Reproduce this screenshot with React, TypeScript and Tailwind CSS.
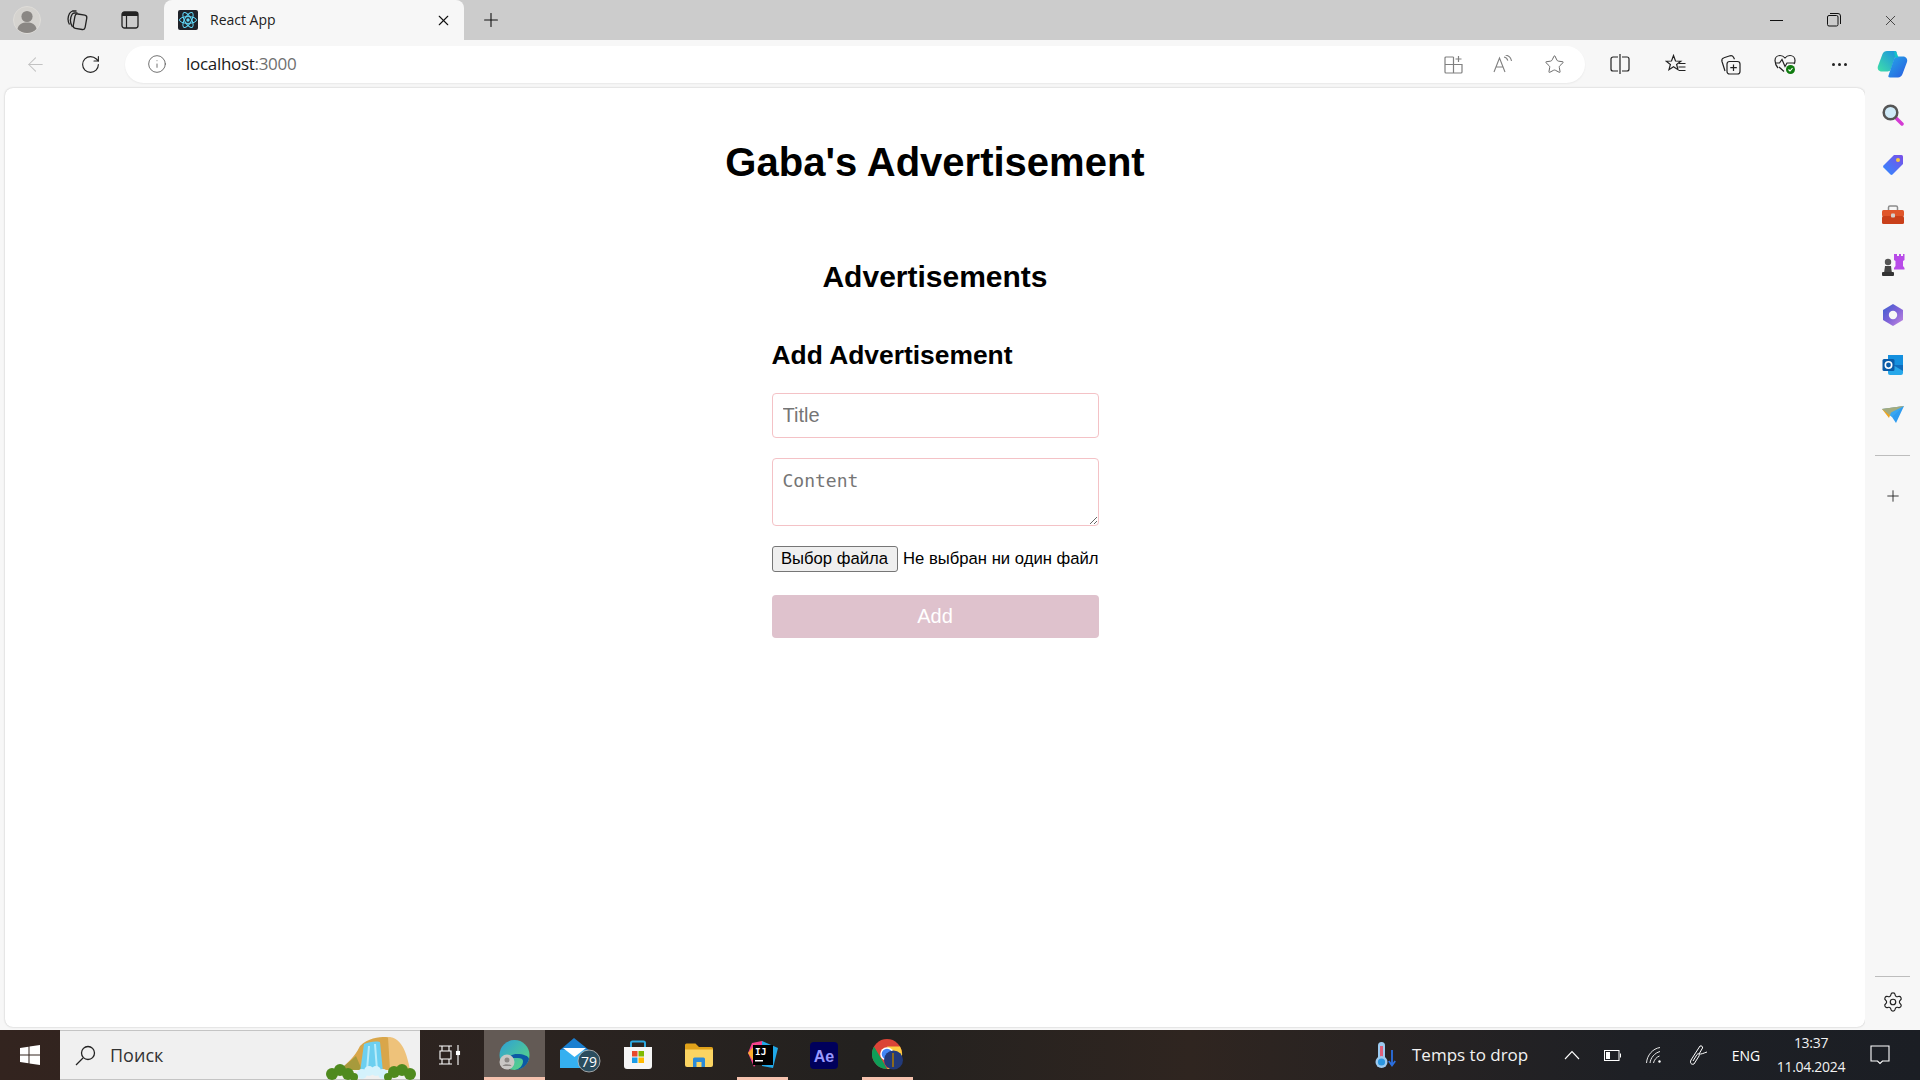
import { ArrowLeft, Info, Plus, RotateCw, Settings, Star, X } from 'lucide-react';
import type { ReactNode } from 'react';

function Slot({ w, children, className = '' }: { w: string; children?: ReactNode; className?: string }) {
  return <div className={`flex shrink-0 items-center justify-center ${w} ${className}`}>{children}</div>;
}

function ReactLogo({ size = 20 }: { size?: number }) {
  return (
    <svg width={size} height={size} viewBox="0 0 20 20">
      <rect width="20" height="20" rx="2" fill="#20232a" />
      <g fill="none" stroke="#61dafb" strokeWidth="1">
        <ellipse cx="10" cy="10" rx="8.5" ry="3.4" />
        <ellipse cx="10" cy="10" rx="8.5" ry="3.4" transform="rotate(60 10 10)" />
        <ellipse cx="10" cy="10" rx="8.5" ry="3.4" transform="rotate(120 10 10)" />
      </g>
      <circle cx="10" cy="10" r="1.7" fill="#61dafb" />
    </svg>
  );
}

function TabStrip() {
  return (
    <div className="flex h-10 items-center bg-[#cccccc]">
      <Slot w="w-[54px]">
        <svg width="28" height="28" viewBox="0 0 28 28">
          <circle cx="14" cy="14" r="13.5" fill="#d5d3cf" stroke="#dedcd8" />
          <circle cx="14" cy="10.5" r="5.6" fill="#8a8784" />
          <path d="M4.5 23c.8-4.6 4.6-6.5 9.5-6.5s8.700 1.900 9.500 6.500c-2.500 2.600-5.800 4-9.500 4s-7-1.400-9.500-4z" fill="#8a8784" />
        </svg>
      </Slot>
      <Slot w="w-[46px]">
        <svg width="22" height="22" viewBox="0 0 22 22" fill="none" stroke="#222" strokeWidth="1.3">
          <rect x="8" y="5.500" width="12" height="14.500" rx="2.500" transform="rotate(10 14 13)" />
          <path d="M6.500 18C4 14 4 9 6 5.500c.6-1 1.500-1.500 2.500-1.500h3M3.500 15.500C1.600 12 1.600 8 3.500 4.500c.7-1.300 1.700-2 3-2.500h4" />
        </svg>
      </Slot>
      <Slot w="w-[60px]">
        <svg width="18" height="18" viewBox="0 0 18 18">
          <rect x="1" y="1" width="16" height="16" rx="2.500" fill="none" stroke="#222" strokeWidth="1.300" />
          <path d="M1 3.500a2.500 2.500 0 0 1 2.500-2.500h11a2.500 2.500 0 0 1 2.500 2.500V5H1z" fill="#222" />
          <path d="M5.500 5v12" stroke="#222" strokeWidth="1.200" />
        </svg>
      </Slot>
      <div className="ml-1 flex h-10 w-[300px] items-center rounded-t-lg bg-[#f7f7f7] pl-[14px]">
        <ReactLogo />
        <span className="ml-3 -mt-[2px] font-['Open_Sans',sans-serif] text-[14px] text-[#222]">React App</span>
        <X className="ml-auto mr-[12px]" size={17} strokeWidth={1.5} color="#111" />
      </div>
      <Slot w="w-[54px]">
        <Plus size={22} strokeWidth={1.2} color="#111" />
      </Slot>
      <div className="ml-auto flex items-center pr-px">
        <Slot w="w-[57px]">
          <div className="h-px w-[13px] bg-[#111]" />
        </Slot>
        <Slot w="w-[57px]">
          <svg width="14" height="14" viewBox="0 0 14 14" fill="none" stroke="#111" strokeWidth="1">
            <rect x="0.500" y="2.500" width="10.500" height="10.500" rx="1.500" />
            <path d="M3 .5h8a2.500 2.500 0 0 1 2.500 2.500v8" />
          </svg>
        </Slot>
        <Slot w="w-[57px]">
          <X size={17} strokeWidth={1} color="#111" />
        </Slot>
      </div>
    </div>
  );
}

function Toolbar() {
  return (
    <div className="flex h-12 items-center bg-[#f7f7f7]">
      <Slot w="w-[70px]">
        <ArrowLeft size={23} strokeWidth={1.1} color="#c2c2c2" />
      </Slot>
      <Slot w="w-[40px]">
        <RotateCw size={21} strokeWidth={1.3} color="#222" />
      </Slot>
      <div className="ml-[15px] flex h-[37px] w-[1460px] items-center rounded-full bg-white shadow-[0_1px_2px_rgba(0,0,0,0.06)]">
        <Slot w="w-[61px]" className="pl-[3px]">
          <Info size={20} strokeWidth={1} color="#555" />
        </Slot>
        <span className="font-['Open_Sans',sans-serif] text-[17px] tracking-[-0.3px] text-[#1a1a1a]">
          localhost<span className="text-[#6f6f6f]">:3000</span>
        </span>
        <div className="ml-auto flex items-center pr-[5px]">
          <Slot w="w-[50px]">
            <svg width="19" height="19" viewBox="0 0 19 19" fill="none" stroke="#808080" strokeWidth="1.200">
              <path d="M9.500 2H2a1 1 0 0 0-1 1v14a1 1 0 0 0 1 1h15a1 1 0 0 0 1-1V9.500H1M9.500 2v16M14.500 1v6M11.500 4h6" />
            </svg>
          </Slot>
          <Slot w="w-[50px]">
            <svg width="20" height="18" viewBox="0 0 20 18" fill="none" stroke="#808080" strokeWidth="1.100">
              <path d="M1 17 6.500 3 12 17M3 12h7" />
              <path d="M11 2c2 .4 3.300 1.700 3.800 3.700M12.500 0c3 .5 5.500 2.800 6 6" />
            </svg>
          </Slot>
          <Slot w="w-[52px]">
            <Star size={21} strokeWidth={1.1} color="#666" />
          </Slot>
        </div>
      </div>
      <Slot w="w-[57px]" className="ml-[6px]">
        <svg width="20" height="20" viewBox="0 0 20 20" fill="none" stroke="#222" strokeWidth="1.200">
          <path d="M8 3H3a2 2 0 0 0-2 2v10a2 2 0 0 0 2 2h5M12 3h5a2 2 0 0 1 2 2v10a2 2 0 0 1-2 2h-5M10 0v20" />
        </svg>
      </Slot>
      <Slot w="w-[54px]">
        <svg width="21" height="20" viewBox="0 0 21 20" fill="none" stroke="#222" strokeWidth="1.200">
          <path d="M8.500 1.500 10.500 7l5.300.2-4.200 3.300 1.400 5.200-4.500-3-4.500 3 1.400-5.200L1.200 7.200 6.500 7z" />
          <path d="M14 9.500h6.500M13.500 13h7M14 16.500h6.500" />
        </svg>
      </Slot>
      <Slot w="w-[56px]">
        <svg width="21" height="21" viewBox="0 0 21 21" fill="none" stroke="#222" strokeWidth="1.200">
          <rect x="7" y="7.500" width="13" height="12.500" rx="2.500" />
          <path d="M13.500 10.500v6.500M10.300 13.700h6.500" />
          <path d="M5 17 2 7.500a3 3 0 0 1 2-3.700L10 1.800a3 3 0 0 1 3.500 1.500l1 2" />
        </svg>
      </Slot>
      <Slot w="w-[54px]">
        <svg width="22" height="22" viewBox="0 0 22 22" fill="none">
          <path d="M4 15C1.500 12 1 10 1 7.500 1 4.500 3.300 2.500 6 2.500c2 0 3.800 1 5 2.500 1.200-1.500 3-2.500 5-2.500 2.700 0 5 2 5 5 0 1.300-.3 2.500-1 3.500" stroke="#222" strokeWidth="1.200" />
          <path d="M1 10h4.500L8 6.500l3 7 2-3.500h7M5 14l5 4.500" stroke="#222" strokeWidth="1.200" />
          <circle cx="16.500" cy="16.500" r="4.500" fill="#107c10" />
          <path d="m14.500 16.500 1.500 1.500 2.500-2.800" stroke="#fff" strokeWidth="1.100" />
        </svg>
      </Slot>
      <Slot w="w-[55px]">
        <div className="flex gap-[3px]">
          <div className="size-[3px] rounded-full bg-[#222]" />
          <div className="size-[3px] rounded-full bg-[#222]" />
          <div className="size-[3px] rounded-full bg-[#222]" />
        </div>
      </Slot>
      <Slot w="w-[50px]">
        <svg width="31" height="28" viewBox="0 0 31 28">
          <defs>
            <linearGradient id="copA" x1="0" y1="1" x2="1" y2="0">
              <stop offset="0" stopColor="#3fe0a8" />
              <stop offset="1" stopColor="#1b8fe0" />
            </linearGradient>
            <linearGradient id="copB" x1="0" y1="0" x2="1" y2="1">
              <stop offset="0" stopColor="#24a9e8" />
              <stop offset="1" stopColor="#2a5ae0" />
            </linearGradient>
          </defs>
          <path d="M10 1h8c1.500 0 2 1 1.500 2L14 19c-.6 1.700-1.800 2.500-3.500 2.500H5C1.500 21.500 0 19 1 16L5.500 4C6.300 2 8 1 10 1z" fill="url(#copA)" />
          <path d="M21 6.500h5c3 0 5 2.500 4 5.500l-4.500 12c-.8 2-2.500 3.500-4.500 3.500h-8c-1.500 0-2-1-1.500-2L17 9c.6-1.700 2.200-2.500 4-2.500z" fill="url(#copB)" />
          <path d="M17 1c2 0 2.500 1.500 3.500 4l1 2.500H18z" fill="#12c3c8" />
        </svg>
      </Slot>
    </div>
  );
}

function AdForm() {
  return (
    <div className="flex w-[327px] flex-col items-stretch">
      <h2 className="mt-[46px] text-[26.4px] font-bold leading-[30px] text-black">Add Advertisement</h2>
      <input
        type="text"
        placeholder="Title"
        className="mt-[23px] h-[45px] rounded-[4px] border border-[#f4c2c6] bg-white px-[10px] text-[20px] text-black outline-none placeholder:text-[#757575]"
      />
      <textarea
        placeholder="Content"
        className="mt-[20px] h-[68px] rounded-[4px] border border-[#f4c2c6] bg-white px-[10px] pb-[9px] pt-[11px] font-['DejaVu_Sans_Mono',monospace] text-[18px] leading-[21px] outline-none placeholder:text-[#757575]"
      />
      <div className="mt-[20px] flex h-[26px] items-center justify-between">
        <button className="h-[26px] w-[126px] shrink-0 whitespace-nowrap rounded-[3px] border border-[#767676] bg-[#efefef] text-center text-[16.67px] leading-none text-black">
          Выбор файла
        </button>
        <span className="whitespace-nowrap text-[16.67px] leading-none text-black">Не выбран ни один файл</span>
      </div>
      <button className="mt-[23px] h-[43px] rounded-[4px] bg-[#dfc2cd] pb-[2px] text-[20px] text-white">Add</button>
    </div>
  );
}

function SidebarIcons() {
  return (
    <div className="flex w-[55px] shrink-0 flex-col items-center bg-[#f7f7f7] pt-[1px]">
      <Slot w="w-full h-[51px]">
        <svg width="22" height="22" viewBox="0 0 22 22">
          <path d="M13.500 13.500 20 20" stroke="#d43bd4" strokeWidth="3.500" strokeLinecap="round" />
          <circle cx="8.500" cy="8.500" r="6.800" fill="#cfeaf8" stroke="#555" strokeWidth="2.500" />
        </svg>
      </Slot>
      <Slot w="w-full h-[50px]">
        <svg width="22" height="22" viewBox="0 0 22 22">
          <defs>
            <linearGradient id="tagG" x1="0" y1="1" x2="1" y2="0">
              <stop offset="0" stopColor="#2f8bff" />
              <stop offset="1" stopColor="#7a4fe8" />
            </linearGradient>
          </defs>
          <path d="M12 1h7.500A1.500 1.500 0 0 1 21 2.500V10L10.500 20.500a1.500 1.500 0 0 1-2 0l-7-7a1.500 1.500 0 0 1 0-2z" fill="url(#tagG)" />
          <circle cx="16" cy="6" r="2" fill="#f7c744" />
        </svg>
      </Slot>
      <Slot w="w-full h-[50px]">
        <svg width="24" height="20" viewBox="0 0 24 20">
          <path d="M7.500 5V2.500A1.500 1.500 0 0 1 9 1h6a1.500 1.500 0 0 1 1.500 1.500V5" fill="none" stroke="#8c8c8c" strokeWidth="1.500" />
          <rect x="1" y="5" width="22" height="6.500" rx="1.500" fill="#e0562a" />
          <rect x="1" y="11" width="22" height="8" rx="1.500" fill="#c9401a" />
          <rect x="10" y="8.500" width="4" height="4" rx="1" fill="#d5d0cc" />
        </svg>
      </Slot>
      <Slot w="w-full h-[50px]">
        <svg width="24" height="24" viewBox="0 0 24 24">
          <path d="M14 1h2v2h2V1h2v2h2V1h1.500v6l-1.500 1v5l1.500 2v1.500H13V15l1.500-2V8L13 7V1z" fill="#b84be8" />
          <circle cx="7" cy="9" r="3.200" fill="#555" />
          <path d="M4 13h6l.8 6H3.200z" fill="#444" />
          <rect x="1" y="19" width="12" height="4" rx="1" fill="#333" />
        </svg>
      </Slot>
      <Slot w="w-full h-[50px]">
        <svg width="22" height="24" viewBox="0 0 22 24">
          <defs>
            <linearGradient id="m365" x1="0" y1="0" x2="1" y2="1">
              <stop offset="0" stopColor="#3a5fd0" />
              <stop offset="0.5" stopColor="#7d62d8" />
              <stop offset="1" stopColor="#c68ae0" />
            </linearGradient>
          </defs>
          <path d="M11 1 21 7v10l-10 6L1 17V7z" fill="url(#m365)" />
          <circle cx="11" cy="12" r="4.200" fill="#f7f7f7" />
        </svg>
      </Slot>
      <Slot w="w-full h-[50px]">
        <svg width="22" height="22" viewBox="0 0 22 22">
          <rect x="6" y="1" width="15" height="10" fill="#1490df" />
          <path d="M6 11h15v8a2 2 0 0 1-2 2H8a2 2 0 0 1-2-2z" fill="#28a8ea" />
          <path d="M11 11 21 17v-6z" fill="#0f6cbd" />
          <rect x="0.500" y="5" width="12" height="12" rx="1.500" fill="#0a5ca8" />
          <circle cx="6.500" cy="11" r="3.200" fill="none" stroke="#fff" strokeWidth="1.600" />
        </svg>
      </Slot>
      <Slot w="w-full h-[50px]">
        <svg width="24" height="18" viewBox="0 0 24 18">
          <path d="M1 3 23 0 15 17 11 11z" fill="#2f9cf0" />
          <path d="M1 3 23 0 10 6.500 8 12z" fill="#f0a51e" />
          <path d="M1 3 23 0 11 11z" fill="#45b4f5" opacity="0.45" />
        </svg>
      </Slot>
      <div className="mt-[15px] h-px w-[35px] bg-[#bdbdbd]" />
      <Slot w="w-full h-[79px]">
        <Plus size={18} strokeWidth={1.2} color="#222" />
      </Slot>
      <div className="mt-auto h-px w-[35px] bg-[#bdbdbd]" />
      <Slot w="w-full h-[50px]">
        <Settings size={22} strokeWidth={1.3} color="#222" />
      </Slot>
    </div>
  );
}

function Taskbar() {
  return (
    <div className="flex h-[50px] items-stretch bg-[linear-gradient(90deg,#33241f_0%,#2a2320_30%,#23211f_45%,#2f2520_62%,#1e2025_85%,#1b1e24_100%)] text-white">
      <Slot w="w-[60px]">
        <svg width="20" height="20" viewBox="0 0 20 20" fill="#fff">
          <path d="M0 3 8.500 1.800v7.700H0zM9.500 1.600 20 0v9.500H9.500zM0 10.500h8.500v7.700L0 17zM9.500 10.500H20V20L9.500 18.400z" />
        </svg>
      </Slot>
      <div className="relative flex w-[360px] items-center border-y border-[#c4c4c4] bg-[#f0f0f0] pl-[15px]">
        <svg width="21" height="21" viewBox="0 0 21 21" fill="none" stroke="#222" strokeWidth="1.300">
          <circle cx="13" cy="8" r="6.500" />
          <path d="M8 13 1 20" />
        </svg>
        <span className="ml-[14px] font-['Open_Sans',sans-serif] text-[18px] text-[#333]">Поиск</span>
        <svg className="absolute left-[266px] top-[5px]" width="92" height="44" viewBox="0 0 92 44">
          <path d="M14 34C22 26 28 22 34 10 42 2 52 1 60 1c12 0 18 12 22 33z" fill="#d9a64a" />
          <path d="M62 1c12 0 18 12 22 33H64z" fill="#eec27a" />
          <path d="M14 34C20 28 26 24 30 20l6 14z" fill="#a79a3c" />
          <path d="M38 8c5-2 11-3 16-2l3 30H34z" fill="#6ccff0" />
          <path d="M43 10l-2 24M49 8l2 26" stroke="#b8ecfa" strokeWidth="2" />
          <g fill="#d4f2fc">
            <circle cx="36" cy="38" r="5" />
            <circle cx="43" cy="35" r="5" />
            <circle cx="50" cy="35" r="5" />
            <circle cx="57" cy="38" r="5" />
          </g>
          <g fill="#4f8a1e">
            <circle cx="6" cy="38" r="6" />
            <circle cx="14" cy="34" r="6" />
            <circle cx="22" cy="38" r="6" />
            <circle cx="28" cy="41" r="4" />
            <circle cx="62" cy="41" r="4" />
            <circle cx="68" cy="36" r="6" />
            <circle cx="76" cy="34" r="6" />
            <circle cx="84" cy="38" r="6" />
          </g>
        </svg>
      </div>
      <Slot w="w-[60px]">
        <svg width="22" height="20" viewBox="0 0 22 20" fill="none" stroke="#fff" strokeWidth="1.100">
          <path d="M0 1h13M0 19h13M1 6h11v8H1zM3 1v5M10 1v5M3 14v5M10 14v5" />
          <path d="M19 0v6M19 10v10" />
          <rect x="17.500" y="6.500" width="3" height="3" fill="#fff" />
        </svg>
      </Slot>
      <div className="relative ml-[4px] flex w-[61px] items-center justify-center bg-[#635a55]">
        <svg width="31" height="31" viewBox="0 0 31 31">
          <defs>
            <linearGradient id="edgeG" x1="0" y1="0" x2="1" y2="1">
              <stop offset="0" stopColor="#2d9fd8" />
              <stop offset="1" stopColor="#5edb7a" />
            </linearGradient>
          </defs>
          <circle cx="15.500" cy="15" r="15" fill="url(#edgeG)" />
          <path d="M30 19c-2 7-8 11-14 11 5-1 8-5 8-9 0-2-2-3-5-3-5 0-9-1-10 3 0-5 4-7 9-7 6 0 12 2 12 5z" fill="#0c59a4" />
          <circle cx="8" cy="22" r="7.500" fill="#c9c7c4" />
          <circle cx="8" cy="20" r="2.500" fill="#8b8885" />
          <path d="M3.500 26c1-2.500 8-2.500 9 0z" fill="#8b8885" />
        </svg>
        <div className="absolute inset-x-0 bottom-0 h-[3px] bg-[#f5c2ae]" />
      </div>
      <Slot w="w-[50px]" className="relative ml-[10px]">
        <svg width="42" height="36" viewBox="0 0 42 36">
          <path d="M1 13 15 1l15 12v18H1z" fill="#1a7fd0" />
          <path d="M1 13h29v18H1z" fill="#35b0f0" />
          <path d="M4 11h23l-11.500 9z" fill="#fff" />
          <circle cx="30" cy="24" r="11" fill="#2b4d5e" stroke="#bfbfbf" strokeWidth="0.800" />
          <text x="30" y="29.500" textAnchor="middle" fontSize="14" fontFamily="Open Sans, sans-serif" fill="#fff">79</text>
        </svg>
      </Slot>
      <Slot w="w-[66px]">
        <svg width="30" height="30" viewBox="0 0 30 30">
          <path d="M8 7V3a1.500 1.500 0 0 1 1.500-1.500h11A1.500 1.500 0 0 1 22 3v4" fill="none" stroke="#2aa8e0" strokeWidth="2" />
          <path d="M1 7h28v19a3 3 0 0 1-3 3H4a3 3 0 0 1-3-3z" fill="#f5f5f5" />
          <rect x="9" y="11" width="5.500" height="5.500" fill="#e8492c" />
          <rect x="15.500" y="11" width="5.500" height="5.500" fill="#7fba00" />
          <rect x="9" y="17.500" width="5.500" height="5.500" fill="#1a9ce8" />
          <rect x="15.500" y="17.500" width="5.500" height="5.500" fill="#ffb900" />
        </svg>
      </Slot>
      <Slot w="w-[56px]">
        <svg width="28" height="24" viewBox="0 0 28 24">
          <path d="M0 2a1.500 1.500 0 0 1 1.500-1.500h9L14 4h12.500A1.500 1.500 0 0 1 28 5.500V8H0z" fill="#e0a21a" />
          <path d="M0 6.500h28v15.500a2 2 0 0 1-2 2H2a2 2 0 0 1-2-2z" fill="#fbd462" />
          <path d="M8 24v-8a1.500 1.500 0 0 1 1.500-1.500h9A1.500 1.500 0 0 1 20 16v8h-3.500v-5h-5v5z" fill="#2b8ad8" />
        </svg>
      </Slot>
      <Slot w="w-[51px]" className="relative ml-[10px]">
        <svg width="30" height="30" viewBox="0 0 30 30">
          <path d="M4 3 14 1l6 6-14 20-6-14z" fill="#f43f8e" />
          <path d="M14 1l16 7-5 20-11-2z" fill="#20a8e8" />
          <path d="M0 13 8 4l4 12-6 6z" fill="#fbb02d" />
          <rect x="5" y="5" width="20" height="20" fill="#000" />
          <text x="7" y="15" fontSize="9.500" fontWeight="700" fontFamily="DejaVu Sans Mono, monospace" fill="#fff">IJ</text>
          <rect x="7" y="20" width="8" height="1.500" fill="#fff" />
        </svg>
        <div className="absolute inset-x-0 bottom-0 h-[3px] bg-[#f5c2ae]" />
      </Slot>
      <Slot w="w-[71px]">
        <svg width="28" height="27" viewBox="0 0 28 27">
          <rect width="28" height="27" rx="4" fill="#00005b" />
          <text x="14" y="20" textAnchor="middle" fontSize="16" fontWeight="700" fontFamily="Liberation Sans, sans-serif" fill="#9999ff">Ae</text>
        </svg>
      </Slot>
      <Slot w="w-[51px]" className="relative ml-[3px]">
        <svg width="32" height="32" viewBox="0 0 32 32">
          <circle cx="15" cy="15" r="15" fill="#db4437" />
          <path d="M15 30A15 15 0 0 1 2 7.500l8 13.500z" fill="#0f9d58" />
          <path d="M15 30a15 15 0 0 0 13-22.500H15l7 13z" fill="#ffcd40" />
          <circle cx="15" cy="15" r="6.800" fill="#fff" />
          <circle cx="15" cy="15" r="5.300" fill="#4285f4" />
          <circle cx="21.500" cy="21" r="9.500" fill="#223a7a" />
          <path d="M21 14v14" stroke="#8a6a1e" strokeWidth="2" />
        </svg>
        <div className="absolute inset-x-0 bottom-0 h-[3px] bg-[#f5c2ae]" />
      </Slot>

      <div className="ml-auto flex items-center">
        <svg width="22" height="30" viewBox="0 0 22 28">
          <rect x="4" y="1" width="7" height="19" rx="3.500" fill="#9ecbf0" />
          <rect x="6" y="5" width="3" height="11" fill="#e0607a" />
          <circle cx="7.500" cy="21" r="6" fill="#9ecbf0" />
          <circle cx="7.500" cy="21" r="3.600" fill="#2b96e0" />
          <path d="M18 9v15M14.800 20l3.200 4.500 3.200-4.500" fill="none" stroke="#2b6fe0" strokeWidth="1.800" />
        </svg>
        <span className="ml-[16px] w-[139px] font-['Open_Sans',sans-serif] text-[17px] text-[#f2f2f2]">Temps to drop</span>
        <Slot w="w-[42px]">
          <svg width="16" height="10" viewBox="0 0 16 10" fill="none" stroke="#fff" strokeWidth="1.100">
            <path d="M1 9l7-7.500L15 9" />
          </svg>
        </Slot>
        <Slot w="w-[38px]">
          <svg width="17" height="11" viewBox="0 0 17 11" fill="none" stroke="#fff">
            <rect x="0.500" y="0.500" width="14.500" height="10" />
            <rect x="2" y="2" width="4" height="7" fill="#fff" stroke="none" />
            <path d="M16.500 3.500v4" />
          </svg>
        </Slot>
        <Slot w="w-[46px]">
          <svg width="16" height="17" viewBox="0 0 16 17" fill="none" stroke="#e8e8e8">
            <path d="M.5 16C1 8 7 1.500 14 .5M4 16c.5-5 4.500-10 10-11.500M7.500 16c.5-3 3-6 6-7" />
            <circle cx="13.500" cy="14.500" r="1.200" fill="#fff" stroke="none" />
          </svg>
        </Slot>
        <Slot w="w-[42px]">
          <svg width="20" height="21" viewBox="0 0 20 21" fill="none" stroke="#fff" strokeWidth="1">
            <path d="M12 1 3 15c-1.500 3 .5 5 3 4l5-8c1-2-1-3-2-1.500L5 16" />
            <path d="M12 1c1.500-.5 3 .5 2.500 2L11 9c2 .5 5-1 8-2" />
          </svg>
        </Slot>
        <span className="w-[54px] text-center font-['Open_Sans',sans-serif] text-[14px] text-white">ENG</span>
        <div className="flex w-[76px] flex-col items-center font-['Open_Sans',sans-serif] text-[14px] leading-[24px] tracking-[-0.3px] text-[#f2f2f2]">
          <span>13:37</span>
          <span>11.04.2024</span>
        </div>
        <Slot w="w-[62px]">
          <svg width="20" height="20" viewBox="0 0 20 20" fill="none" stroke="#fff" strokeWidth="1.100">
            <path d="M1 1h18v15h-6.500L10 18.500 7.500 16H1z" />
          </svg>
        </Slot>
        <div className="w-[9px]" />
      </div>
    </div>
  );
}

export default function App() {
  return (
    <div className="flex h-screen w-full flex-col overflow-hidden font-['Liberation_Sans',Arial,sans-serif]">
      <TabStrip />
      <Toolbar />
      <div className="flex min-h-0 flex-1 bg-[#f7f7f7] pb-[3px] pl-[5px]">
        <main className="flex flex-1 flex-col items-center rounded-lg bg-white shadow-[0_0_2px_rgba(0,0,0,0.25)]">
          <h1 className="mt-[51px] text-[40px] font-bold leading-[46px] text-black">Gaba's Advertisement</h1>
          <h2 className="mt-[75px] text-[30px] font-bold leading-[34px] text-black">Advertisements</h2>
          <AdForm />
        </main>
        <SidebarIcons />
      </div>
      <Taskbar />
    </div>
  );
}
